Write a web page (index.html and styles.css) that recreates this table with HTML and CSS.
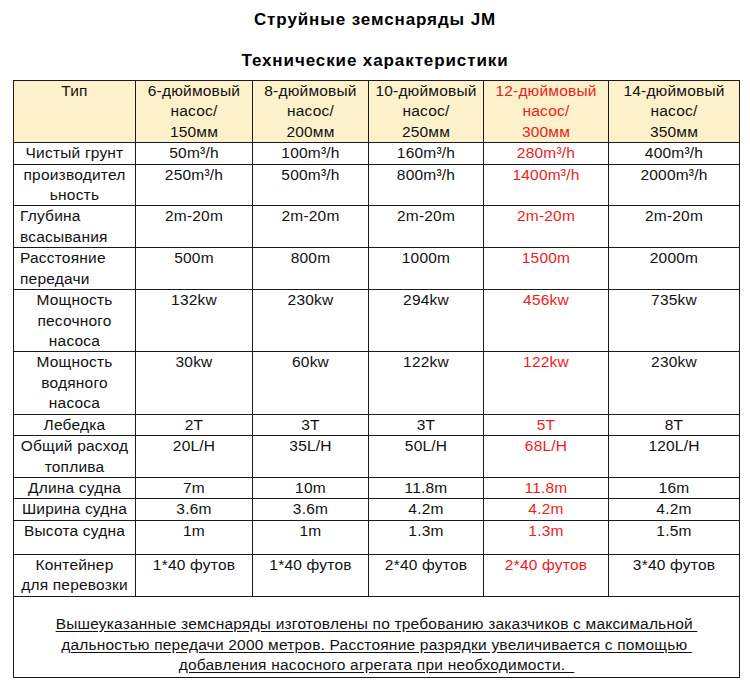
FILE: index.html
```html
<!DOCTYPE html>
<html lang="ru">
<head>
<meta charset="utf-8">
<title>Струйные земснаряды JM</title>
<link rel="stylesheet" href="styles.css">
</head>
<body>
<div class="page">
  <h1 class="title t1">Струйные земснаряды JM</h1>
  <h2 class="title t2">Технические характеристики</h2>
  <table class="spec">
    <colgroup>
      <col class="c1"><col class="c2"><col class="c3"><col class="c4"><col class="c5"><col class="c6">
    </colgroup>
    <tr class="head h63">
      <td>Тип</td>
      <td>6-дюймовый<br>насос/<br>150мм</td>
      <td>8-дюймовый<br>насос/<br>200мм</td>
      <td>10-дюймовый<br>насос/<br>250мм</td>
      <td class="red">12-дюймовый<br>насос/<br>300мм</td>
      <td>14-дюймовый<br>насос/<br>350мм</td>
    </tr>
    <tr class="h21">
      <td>Чистый грунт</td><td>50m³/h</td><td>100m³/h</td><td>160m³/h</td><td class="red">280m³/h</td><td>400m³/h</td>
    </tr>
    <tr class="h42">
      <td>производител<br>ьность</td><td>250m³/h</td><td>500m³/h</td><td>800m³/h</td><td class="red">1400m³/h</td><td>2000m³/h</td>
    </tr>
    <tr class="h41">
      <td class="left">Глубина<br>всасывания</td><td>2m-20m</td><td>2m-20m</td><td>2m-20m</td><td class="red">2m-20m</td><td>2m-20m</td>
    </tr>
    <tr class="h43">
      <td class="left">Расстояние<br>передачи</td><td>500m</td><td>800m</td><td>1000m</td><td class="red">1500m</td><td>2000m</td>
    </tr>
    <tr class="h62">
      <td>Мощность<br>песочного<br>насоса</td><td>132kw</td><td>230kw</td><td>294kw</td><td class="red">456kw</td><td>735kw</td>
    </tr>
    <tr class="h63">
      <td>Мощность<br>водяного<br>насоса</td><td>30kw</td><td>60kw</td><td>122kw</td><td class="red">122kw</td><td>230kw</td>
    </tr>
    <tr class="h21">
      <td>Лебедка</td><td>2T</td><td>3T</td><td>3T</td><td class="red">5T</td><td>8T</td>
    </tr>
    <tr class="h42">
      <td>Общий расход<br>топлива</td><td>20L/H</td><td>35L/H</td><td>50L/H</td><td class="red">68L/H</td><td>120L/H</td>
    </tr>
    <tr class="h21">
      <td>Длина судна</td><td>7m</td><td>10m</td><td>11.8m</td><td class="red">11.8m</td><td>16m</td>
    </tr>
    <tr class="h21">
      <td>Ширина судна</td><td>3.6m</td><td>3.6m</td><td>4.2m</td><td class="red">4.2m</td><td>4.2m</td>
    </tr>
    <tr class="h35">
      <td>Высота судна</td><td>1m</td><td>1m</td><td>1.3m</td><td class="red">1.3m</td><td>1.5m</td>
    </tr>
    <tr class="h42">
      <td>Контейнер<br>для перевозки</td><td>1*40 футов</td><td>1*40 футов</td><td>2*40 футов</td><td class="red">2*40 футов</td><td>3*40 футов</td>
    </tr>
    <tr class="h82">
      <td class="note" colspan="6"><span class="u">Вышеуказанные земснаряды изготовлены по требованию заказчиков с максимальной&nbsp;</span><br><span class="u">дальностью передачи 2000 метров. Расстояние разрядки увеличивается с помощью&nbsp;</span><br><span class="u">добавления насосного агрегата при необходимости.&nbsp;&nbsp;</span></td>
    </tr>
  </table>
</div>
</body>
</html>
```
FILE: styles.css
```css
html, body {
  margin: 0;
  padding: 0;
  background: #ffffff;
}
body {
  font-family: "Liberation Sans", Arial, sans-serif;
  color: #111111;
}
.page {
  width: 750px;
  padding-top: 10px;
}
.title {
  margin: 0;
  font-size: 17px;
  letter-spacing: 0.9px;
  line-height: 20px;
  font-weight: bold;
  text-align: center;
  color: #000000;
}
.t2 {
  margin-top: 21px;
}
.spec {
  margin: 9px 0 0 13px;
  border-collapse: collapse;
  table-layout: fixed;
  width: 726px;
  font-size: 15.5px;
  letter-spacing: 0.2px;
  line-height: 20.4px;
}
.c1 { width: 122px; }
.c2 { width: 117px; }
.c3 { width: 116px; }
.c4 { width: 115px; }
.c5 { width: 125px; }
.c6 { width: 131px; }
.spec td {
  border: 1px solid #1a1a1a;
  padding: 0;
  text-align: center;
  vertical-align: top;
  white-space: nowrap;
}
.head td {
  background: #fdf1cb;
}
.spec td.left {
  text-align: left;
  padding-left: 6px;
}
.spec td.red {
  color: #ee1c1c;
}
.h21 { height: 20px; }
.h35 { height: 34px; }
.h41 { height: 40px; }
.h42 { height: 41px; }
.h43 { height: 42px; }
.h62 { height: 61px; }
.h63 { height: 62px; }
.h82 { height: 81px; }
.spec td.note {
  vertical-align: bottom;
  line-height: 20.5px;
  padding-bottom: 1px;
}
.u {
  text-decoration: underline;
  text-underline-offset: 2px;
}
```
